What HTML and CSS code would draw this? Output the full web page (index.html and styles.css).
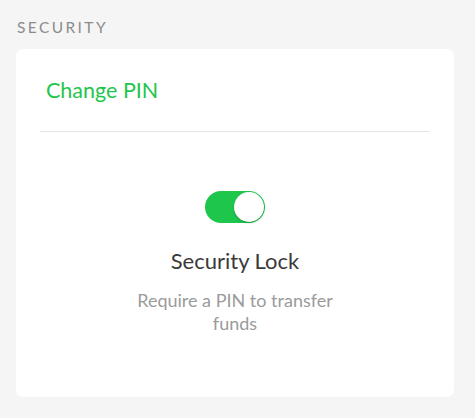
FILE: index.html
```html
<!DOCTYPE html>
<html>
<head>
<meta charset="utf-8">
<link rel="stylesheet" href="styles.css">
</head>
<body>
<div class="page">
  <div class="section-title">SECURITY</div>
  <div class="card">
    <div class="row-link">Change PIN</div>
    <div class="divider"></div>
    <div class="lock">
      <div class="toggle on"><div class="knob"></div></div>
      <div class="lock-title">Security Lock</div>
      <div class="lock-desc">Require a PIN to transfer funds</div>
    </div>
  </div>
</div>
</body>
</html>
```

FILE: styles.css
```css
html, body {
  margin: 0;
  padding: 0;
  background: #f5f5f5;
  font-family: Lato, "Open Sans", Arial, sans-serif;
}
.page {
  padding: 18px 21px 0 16px;
}
.section-title {
  font-size: 15.5px;
  letter-spacing: 2.4px;
  color: #8c8c8c;
  padding-left: 1px;
  line-height: 18px;
  height: 31px;
}
.card {
  background: #ffffff;
  border-radius: 7px;
  height: 348px;
  box-sizing: border-box;
}
.row-link {
  height: 82px;
  box-sizing: border-box;
  padding: 28px 0 0 30px;
  font-size: 21.5px;
  line-height: 26px;
  color: #1fc64c;
}
.divider {
  height: 1px;
  background: #e6e6e6;
  margin: 0 24px;
}
.lock {
  display: flex;
  flex-direction: column;
  align-items: center;
  padding-top: 59px;
}
.toggle {
  width: 60px;
  height: 32px;
  border-radius: 16px;
  background: #1fc64c;
  box-sizing: border-box;
  padding: 1px;
  display: flex;
  justify-content: flex-end;
}
.knob {
  width: 30px;
  height: 30px;
  border-radius: 50%;
  background: #fff;
  box-shadow: 0 1px 2px rgba(0,0,0,0.25);
}
.lock-title {
  margin-top: 25px;
  font-size: 22px;
  line-height: 26px;
  color: #3a3a3a;
}
.lock-desc {
  margin-top: 15px;
  width: 230px;
  text-align: center;
  font-size: 18px;
  line-height: 23px;
  color: #9b9b9b;
}
```
